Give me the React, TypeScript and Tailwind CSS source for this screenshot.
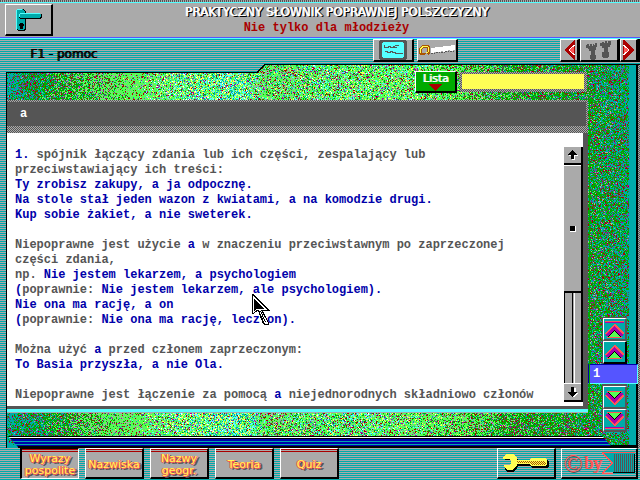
import React, { useMemo } from "react";

type Mix = number[];

// teal, green, dark red, purple, lime, grey, cyan, yellow, white, dark grey
const INKS = ["#00aaaa", "#00aa00", "#aa0000", "#aa00aa", "#55ff55", "#aaaaaa", "#55ffff", "#ffff55", "#ffffff", "#555555"];

const STOPS: [number, Mix][] = [
  [0, [66, 18, 7, 5, 0, 0, 0, 0, 0, 4]],
  [24, [34, 42, 8, 5, 0, 2, 0, 0, 0, 9]],
  [60, [12, 40, 7, 4, 22, 8, 0, 0, 0, 7]],
  [100, [3, 17, 7, 3, 52, 13, 0, 0, 0, 5]],
  [130, [2, 3, 6, 4, 72, 10, 2, 1, 0, 0]],
  [175, [8, 3, 4, 4, 42, 3, 18, 14, 4, 0]],
  [235, [18, 2, 3, 3, 26, 2, 26, 18, 2, 0]],
  [258, [5, 10, 7, 3, 52, 14, 4, 2, 0, 3]],
  [320, [8, 8, 6, 4, 44, 8, 12, 8, 2, 0]],
  [400, [4, 8, 6, 5, 52, 6, 9, 9, 1, 0]],
  [460, [4, 20, 7, 4, 50, 10, 1, 2, 0, 2]],
  [510, [10, 46, 8, 5, 16, 6, 0, 0, 0, 9]],
  [582, [20, 48, 8, 5, 4, 6, 0, 0, 0, 9]],
  [624, [46, 34, 8, 5, 0, 0, 0, 0, 0, 7]],
];

function mixAt(x: number): Mix {
  let i = 0;
  while (i < STOPS.length - 2 && STOPS[i + 1][0] < x) i++;
  const [x0, a] = STOPS[i];
  const [x1, b] = STOPS[i + 1];
  const t = Math.min(1, Math.max(0, (x - x0) / (x1 - x0)));
  return a.map((v, k) => v + (b[k] - v) * t);
}

function speckle(): string[] {
  const paths: string[][] = INKS.map(() => []);
  let seed = 77123;
  const rnd = () => {
    seed = (seed + 0x6d2b79f5) | 0;
    let t = Math.imul(seed ^ (seed >>> 15), 1 | seed);
    t = (t + Math.imul(t ^ (t >>> 7), 61 | t)) ^ t;
    return ((t ^ (t >>> 14)) >>> 0) / 4294967296;
  };
  for (let x = 1; x < 623; x++) {
    const mix = mixAt(x);
    const total = mix.reduce((s, v) => s + v, 0);
    for (let y = 1; y < 381; y++) {
      if (x < 582 && y > 36 && y < 348) continue;
      if (y < 9 && x < 258 - y) continue;
      let r = rnd() * total;
      let k = 0;
      while (k < mix.length - 1 && r > mix[k]) r -= mix[k++];
      paths[k].push(`M${x} ${y}h1v1h-1z`);
    }
  }
  return paths.map((p) => p.join(""));
}

function Marble() {
  const paths = useMemo(speckle, []);
  return (
    <svg className="absolute inset-0 h-full w-full" viewBox="0 0 634 384" preserveAspectRatio="none" shapeRendering="crispEdges" aria-hidden="true">
      <path d="M0 8H250L258 0H630V384H0z" fill="#00aaaa" />
      {paths.map((d, i) => (
        <path key={i} d={d} fill={INKS[i]} />
      ))}
      <path d="M0 8h250l8-8h376v1H259l-8 8H1v375H0z" fill="#000" />
    </svg>
  );
}

const raised = "border-t border-l border-r-2 border-b-2 border-t-white border-l-white border-r-black border-b-black";
const mono = "font-['Liberation_Mono','DejaVu_Sans_Mono',monospace] font-bold";
const dither = "bg-[repeating-conic-gradient(#555555_0%_25%,#aaaaaa_0%_50%)] bg-[length:2px_2px]";

function ToolButton({ label, className, children }: { label: string; className: string; children: React.ReactNode }) {
  return (
    <button aria-label={label} className={`flex shrink-0 items-center justify-center bg-[#aaaaaa] ${raised} ${className}`}>
      {children}
    </button>
  );
}

function Header() {
  return (
    <header className="flex h-[39px] flex-col border-b border-[#55ffff] bg-[#aaaaaa]">
      <div className="h-[2px] bg-[repeating-linear-gradient(90deg,#555555_0_1px,#aaaaaa_1px_2px)]" />
      <div className="h-px bg-[#55ffff]" />
      <div className="flex flex-1 border-b border-[#5555ff] pl-[5px] pt-px">
        <ToolButton label="Wyjście" className="h-[32px] w-[48px]">
          <svg className="shrink-0" width="45" height="29" viewBox="6 5 45 29" shapeRendering="crispEdges">
            <path d="M18 9h6v1h1v1h1v19h-1v1h-7v-1h-1V10h1z" fill="#000" />
            <path d="M18 9h5v1h1v1h1v18h-1v1h-6v-1h-2V10h2z" fill="#00aaaa" />
            <path d="M17 9h5v1h-5v20h-1V10h1z" fill="#55ffff" />
            <path d="M20 14h22v4h-1v1H20v-1h-1v-3h1z" fill="#000" />
            <path d="M20 13h20v1h1v3h-1v1H20v-1h-1v-3h1z" fill="#00aaaa" />
            <path d="M20 13h20v1H20v3h-1v-3h1z" fill="#55ffff" />
            <path d="M20 23h3v1h1v2h-1v3h-3v-3h-1v-2h1z" fill="#000" />
          </svg>
        </ToolButton>
        <div className="flex flex-1 flex-col items-center whitespace-nowrap pr-[20px]">
          <h1 className="mt-px h-[15px] font-['DejaVu_Sans',sans-serif] text-[12px] leading-[15px] text-white [text-shadow:1px_0_#fff,2px_1px_#000,2px_0_#000]">
            PRAKTYCZNY SŁOWNIK POPRAWNEJ POLSZCZYZNY
          </h1>
          <p className={`${mono} h-[14px] pr-[20px] text-[12px] leading-[16px] text-[#aa0000]`}>Nie tylko dla młodzieży</p>
        </div>
      </div>
    </header>
  );
}

function RedArrow({ flip }: { flip?: boolean }) {
  return (
    <svg width="11" height="20" viewBox="0 0 11 20" shapeRendering="crispEdges" className={`shrink-0 ${flip ? "-scale-x-100" : ""}`}>
      <path d="M0 10L10 0h1v20h-1z" fill="#aa0000" />
      <path d="M5 10l5-5v10z" fill="#ff5555" />
      <path d="M5 10l5.500-5M5 10l5.500 5" stroke="#fff" fill="none" />
    </svg>
  );
}

function Toolbar() {
  return (
    <div className="flex h-[25px] items-start">
      <span className="ml-[30px] mt-[8px] flex-1 font-['DejaVu_Sans',sans-serif] text-[12px] leading-[14px] text-black [text-shadow:1px_0_#000]">
        F1 - pomoc
      </span>
      <ToolButton label="Ekran" className="h-[23px] w-[41px]">
        <svg className="shrink-0" width="28" height="20" viewBox="0 0 28 20" shapeRendering="crispEdges">
          <path d="M1 0h26v1h1v18h-1v1H1v-1H0V1h1z" fill="#555" />
          <path d="M4 2h20v1h1v14h-1v1H4v-1H3V3h1z" fill="#55ffff" />
          <path d="M5 5v2h4V6h2v1h3V6h1v1h3M16 5h3v1M6 11h2v1h3v-1h2v1h3v1h8" stroke="#555" fill="none" />
        </svg>
      </ToolButton>
      <ToolButton label="Piła" className="ml-[3px] h-[23px] w-[41px]">
        <svg className="shrink-0" width="37" height="12" viewBox="0 0 37 12" shapeRendering="crispEdges">
          <path d="M3 1h7l1 2v7l-2 1-2-2-2 2H1l-1-2V4z" fill="#aa5500" />
          <path d="M3 2h6v1H4L2 5v4H1V4z" fill="#ffff55" />
          <path d="M4 4h4v3L6 9H3V6z" fill="#aaa" />
          <path d="M9 3v5l-2 1" stroke="#ffff55" fill="none" />
          <path d="M12 4L36 1v5h-2v1h-3V6h-2v1h-3v1h-2V7h-2v1h-3v1h-2V8h-2v1h-3z" fill="#fff" />
          <path d="M12 9.500h4M17 8.500h4M22 8.500h4M26 7.500h4M31 7.500h4" stroke="#555" strokeDasharray="2 1" />
        </svg>
      </ToolButton>
      <div className="ml-[102px] flex gap-px bg-black">
        <ToolButton label="Poprzednie" className="h-[23px] w-[19px]">
          <RedArrow />
        </ToolButton>
        <ToolButton label="Ślady" className="h-[23px] w-[39px]">
          <svg className="shrink-0" width="26" height="19" viewBox="0 0 26 19" shapeRendering="crispEdges">
            <path d="M0 4h1V3h2v2h1V3h2v2h1V3h1v1h1V2h2v4h-1v3H9v5h1v4H9v1H5v-1H4v-4h1v-4H3V8H2V7H0z" fill="#555" />
            <path d="M14 2h2V1h2v1h1V0h2v2h1V0h3v4h-1v2h-2v5h1v5h-1v1h-5v-1h-1v-5h2V7h-2V5h-2z" fill="#555" />
          </svg>
        </ToolButton>
        <ToolButton label="Następne" className="h-[23px] w-[18px]">
          <RedArrow flip />
        </ToolButton>
        <span className="w-px" />
      </div>
    </div>
  );
}

const B = ({ children }: { children: React.ReactNode }) => <b className="text-[#0000aa]">{children}</b>;

function Entry() {
  return (
    <article className={`${mono} h-[256px] flex-1 overflow-hidden whitespace-nowrap pl-[8px] pt-px text-[12px] leading-[15px] text-[#555555]`}>
      <p>
        <B>1.</B> spójnik łączący zdania lub ich części, zespalający lub<br />
        przeciwstawiający ich treści:<br />
        <B>Ty zrobisz zakupy, a ja odpocznę.<br />
        Na stole stał jeden wazon z kwiatami, a na komodzie drugi.<br />
        Kup sobie żakiet, a nie sweterek.</B>
      </p>
      <p className="mt-[15px]">
        Niepoprawne jest użycie <B>a</B> w znaczeniu przeciwstawnym po zaprzeczonej<br />
        części zdania,<br />
        np. <B>Nie jestem lekarzem, a psychologiem</B><br />
        <B>(</B>poprawnie: <B>Nie jestem lekarzem, ale psychologiem).<br />
        Nie ona ma rację, a on<br />
        (</B>poprawnie: <B>Nie ona ma rację, lecz on).</B>
      </p>
      <p className="mt-[15px]">
        Można użyć <B>a</B> przed członem zaprzeczonym:<br />
        <B>To Basia przyszła, a nie Ola.</B>
      </p>
      <p className="mt-[15px]">
        Niepoprawne jest łączenie za pomocą <B>a</B> niejednorodnych składniowo członów
      </p>
    </article>
  );
}

function ScrollArrow({ down }: { down?: boolean }) {
  return (
    <svg width="10" height="10" viewBox="0 0 10 10" shapeRendering="crispEdges" className="shrink-0">
      {down ? (
        <>
          <path d="M4 1h4v5h2v1H9v1H8v1H7v1H4z" fill="#fff" />
          <path d="M3 0h3v5h3v1H8v1H7v1H6v1H5v1H4V9H3V8H2V7H1V6H0V5h3z" fill="#000" />
        </>
      ) : (
        <>
          <path d="M4 1h2v1h1v1h1v1h1v1h1v1H7v4H4V6H1V5h3z" fill="#fff" />
          <path d="M4 0h1v1h1v1h1v1h1v1h1v1H6v4H3V5H0V4h1V3h1V2h1V1h1z" fill="#000" />
        </>
      )}
    </svg>
  );
}

function ScrollBar() {
  return (
    <div className="flex h-[255px] w-[20px] flex-col border-r-2 border-black pl-px">
      <button aria-label="W górę" className="flex h-[18px] items-center justify-center border-b-2 border-black bg-[#aaaaaa]">
        <ScrollArrow />
      </button>
      <div className="flex h-[128px] items-center justify-center border-b-2 border-t border-b-black border-t-white bg-[#aaaaaa]">
        <span className="h-[6px] w-[6px] border-b border-r border-white bg-black" />
      </div>
      <div className="flex flex-1 justify-center border-l border-black bg-[#aaaaaa]">
        <span className="w-[3px] border-l border-r border-l-black border-r-white" />
      </div>
      <button aria-label="W dół" className="flex h-[19px] items-center justify-center border-b-2 border-t border-b-black border-t-white bg-[#aaaaaa]">
        <ScrollArrow down />
      </button>
    </div>
  );
}

function JumpButton({ label, double, down, active }: { label: string; double?: boolean; down?: boolean; active?: boolean }) {
  return (
    <button
      aria-label={label}
      className={`flex h-[23px] w-[24px] items-center justify-center border-b-2 border-l border-r-2 border-t border-l-white border-t-white bg-[#00aaaa] ${active ? "border-b-black border-r-black" : "border-b-[#555555] border-r-[#555555]"}`}
    >
      <svg width="19" height="19" viewBox="0 0 19 19" shapeRendering="crispEdges" className={`shrink-0 ${down ? "-scale-y-100" : ""}`}>
        {double && <path d="M0 1h19v1H0z" fill="#ff5555" />}
        {double && <path d="M0 2h19v1H0z" fill="#aa00aa" />}
        <g transform={double ? "translate(0 1)" : "translate(0 -1)"}>
          <path d="M9 4h1l8 8v3h-2L9.500 9 3 15H1v-3z" fill="#aa00aa" />
          <path d="M9 3h1l9 9v1h-1L9.500 5 1 13H0v-1z" fill="#ff5555" />
          <path d="M9 9h1l6 7v1H3v-1z" fill="#000" />
          <path d="M9 10h1l5 6H4z" fill="#55ff55" />
          <path d="M2 16h15v1H2z" fill="#ff5555" />
        </g>
      </svg>
    </button>
  );
}

function MainPanel() {
  return (
    <main className="relative ml-[6px] flex h-[384px]">
      <Marble />
      <div className="relative flex flex-1 flex-col pl-px">
        <div className="flex h-[36px] items-start justify-end pr-px pt-[7px]">
          <button className={`h-[22px] w-[42px] bg-[#00aa00] text-center font-['DejaVu_Sans',sans-serif] text-[11px] leading-[13px] text-white [text-shadow:1px_0_#fff] ${raised}`}>
            <span className="block h-[12px]">Lista</span>
            <svg className="mx-auto block" width="13" height="7" viewBox="0 0 13 7" shapeRendering="crispEdges">
              <path d="M0 0h13L7 7H6z" fill="#aa0000" />
            </svg>
          </button>
          <div className={`ml-[3px] mt-px h-[20px] w-[127px] p-[2px] ${dither}`}>
            <input aria-label="Szukane słowo" className="block h-[15px] w-[122px] bg-[#ffff55] px-1 text-[12px] text-black outline-none" />
          </div>
        </div>
        <div className={`flex h-[33px] flex-col pb-[7px] pr-[2px] pt-[2px] ${dither}`}>
          <h2 className={`${mono} flex-1 bg-[#555555] pl-[13px] pt-[5px] text-[12px] leading-[15px] text-white`}>a</h2>
        </div>
        <div className="flex h-[276px] border-b-[3px] border-r-[5px] border-[#555555] bg-white pt-[14px]">
          <Entry />
          <ScrollBar />
        </div>
        <div className="h-[3px] bg-[#55ffff]" />
        <div className="h-px bg-[#aaaaaa]" />
      </div>
      <div className="relative flex w-[41px] flex-col pt-[253px]">
        <div className="absolute left-px top-[36px] h-[312px] w-px bg-[#00aa00]" />
        <div className="ml-[14px] flex w-[25px] flex-col bg-[#555555] pl-px pt-px">
          <JumpButton label="Początek" double />
          <JumpButton label="Poprzednia strona" active />
        </div>
        <div className={`${mono} h-[20px] w-[50px] border border-b-[#55ffff] border-l-[#0000aa] border-r-[#55ffff] border-t-[#0000aa] bg-[#5555ff] pl-[4px] text-[12px] leading-[18px] text-white`}>1</div>
        <div className="ml-[14px] flex w-[25px] flex-col bg-[#555555] pl-px pt-[2px]">
          <JumpButton label="Następna strona" down />
          <JumpButton label="Koniec" double down />
        </div>
      </div>
      <div className="mt-[6px] w-[7px] bg-[repeating-linear-gradient(90deg,#0000aa_0_2px,#00aaaa_2px_3px)]" />
      <div className="w-[2px] bg-black" />
      <div className={`w-[2px] ${dither}`} />
      <div className="absolute bottom-0 left-[12px] right-[2px] h-[3px] bg-black" />
      <div className="absolute bottom-px left-[2px] right-[28px] h-[11px] bg-[linear-gradient(#000000_0_1px,#ffffff_1px_2px,#000000_2px_3px,#0000aa_3px_5px,#00aaaa_5px_6px,#0000aa_6px_8px,#00aaaa_8px_9px,#0000aa_9px_10px,#000000_10px_11px)] [clip-path:polygon(0_0,calc(100%_-_10px)_0,100%_100%,10px_100%)]" />
    </main>
  );
}

function TabButton({ children, pressed }: { children: React.ReactNode; pressed?: boolean }) {
  return (
    <button
      className={`flex h-[31px] w-[59px] flex-col bg-[#aaaaaa] ${pressed ? "border-b border-l-2 border-r border-t border-b-white border-l-black border-r-white border-t-black" : raised}`}
    >
      <span className="h-[3px] w-full border-y border-[#aa0000]" />
      <span className="flex w-full flex-1 items-center justify-center whitespace-nowrap font-['DejaVu_Sans',sans-serif] text-[11px] leading-[12px] text-[#ffff55] [text-shadow:1px_0_#ff5555,-1px_0_#ff5555,0_1px_#ff5555,2px_2px_#555555,3px_1px_#555555]">
        {children}
      </span>
    </button>
  );
}

function Footer() {
  return (
    <footer className="flex h-[33px] items-start pl-[20px] pr-[2px]">
      <nav className="flex flex-1 gap-[6px]">
        <TabButton pressed>
          <span>Wyrazy<br />pospolite</span>
        </TabButton>
        <TabButton>Nazwiska</TabButton>
        <TabButton>
          <span>Nazwy<br />geogr.</span>
        </TabButton>
        <TabButton>Teoria</TabButton>
        <TabButton>Quiz</TabButton>
      </nav>
      <button aria-label="Narzędzia" className={`flex h-[31px] w-[59px] items-center justify-center ${raised}`}>
        <svg className="shrink-0" width="46" height="18" viewBox="0 0 46 18" shapeRendering="crispEdges">
          <path d="M4 2h7l4 4v2h12l2-2h15l2 2v4l-2 2H29l-2-2H15l-1 2-4 4H5l-3-2v-3h5l2-2V8L7 6H2V3z" fill="#000" />
          <path d="M3 0h7l4 4v2h12l2-2h14l2 2v4l-2 2H28l-2-2H14v1l-4 4v1H4l-3-3v-2h5l2-2V7L6 5H0V3z" fill="#ffff55" />
          <path d="M14 7.500h28M28 9.500h15" stroke="#aa5500" strokeDasharray="1 1" />
          <path d="M15 8.500h28M29 10.500h13" stroke="#aa5500" strokeDasharray="1 1" />
        </svg>
      </button>
      <button className={`ml-[5px] flex h-[31px] w-[77px] items-center font-['Liberation_Serif',serif] text-[#ff5555] ${raised}`}>
        <span className="flex w-[22px] shrink-0 justify-center text-[25px] leading-[25px] [text-shadow:1px_1px_#555555]">©</span>
        <span className="w-[18px] shrink-0 text-center text-[18px] leading-[18px] [text-shadow:1px_0_#ff5555]">by</span>
        <svg className="shrink-0" width="33" height="22" viewBox="0 0 33 22" shapeRendering="crispEdges">
          <path d="M3 2h30v18H3l8-9z" fill="#00aaaa" />
          <path d="M12 2v18M14 2v18M16 2v18M18 2v18M20 2v18M22 2v18M24 2v18M26 2v18M28 2v18M30 2v18" stroke="#555" />
          <path d="M32 2v18H11" stroke="#000" fill="none" />
          <path d="M0 1l9 10-9 10h2l9-10L2 1z" fill="#ff5555" />
          <path d="M0 0h33v1H0zM0 21h11v1H0z" fill="#ff5555" />
        </svg>
      </button>
    </footer>
  );
}

export default function App() {
  return (
    <div className="relative min-h-screen w-full overflow-hidden bg-[repeating-linear-gradient(#aaaaaa_0_1px,#00aaaa_1px_2px)]">
      <Header />
      <Toolbar />
      <MainPanel />
      <Footer />
      <svg className="absolute left-[252px] top-[294px]" width="19" height="32" viewBox="0 0 19 32" shapeRendering="crispEdges" aria-hidden="true">
        <path d="M0 0h1l17 16v1h-7l6 12v2h-5l-1-1-5-13-5 3H0z" fill="#000" />
        <path d="M1 2l14 14H9l7 13v1h-3L7 16H5l-4 3z" fill="#fff" />
        <path d="M2 4l10 11H7l-2 0-3 2z" fill="#000" />
        <path d="M8 17h1l5 11h-1z" fill="#000" />
      </svg>
    </div>
  );
}
